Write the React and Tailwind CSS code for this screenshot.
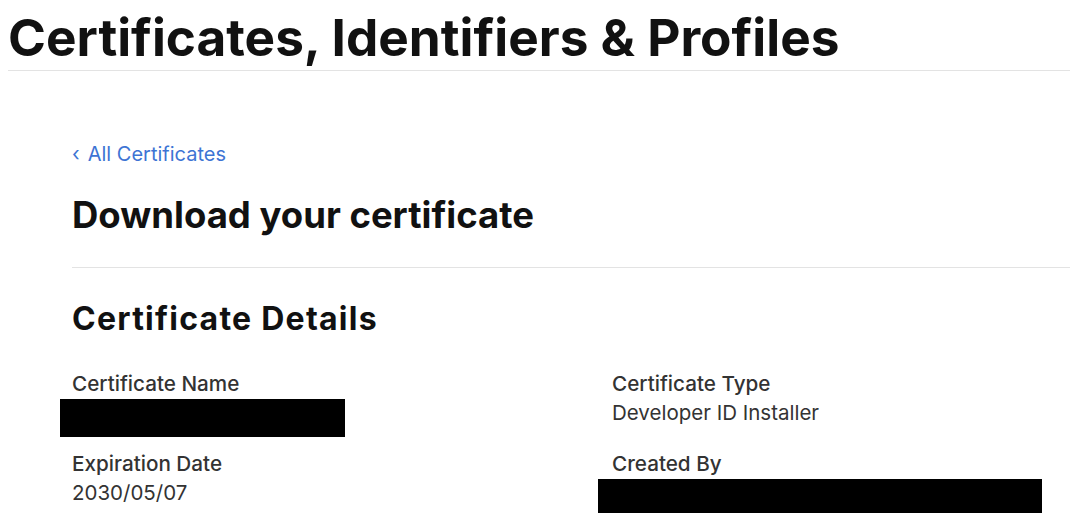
import React from 'react';

function Field({ label, children }) {
  return (
    <div className="flex flex-col">
      <div className="text-[20.7px] font-medium leading-[29px] text-[#333]">{label}</div>
      {children}
    </div>
  );
}

export default function App() {
  return (
    <div className="h-[530px] w-[1070px] overflow-hidden bg-white font-['Inter',sans-serif] text-[#111]">
      <header className="ml-2 border-b border-[#e3e3e3] pt-[9px] pb-[4px]">
        <h1 className="text-[51.3px] font-bold leading-[57px]">Certificates, Identifiers &amp; Profiles</h1>
      </header>

      <main className="pl-[72px] pt-[69px]">
        <a href="#" className="flex items-center gap-2 text-[20px] leading-[28px] text-[#3d74d4]">
          <span className="text-[20px]">‹</span>
          <span>All Certificates</span>
        </a>

        <div className="border-b border-[#e3e3e3] pt-[25px] pb-[30px]">
          <h2 className="text-[36.5px] font-bold leading-[44px]">Download your certificate</h2>
        </div>

        <h3 className="pt-[31px] text-[32px] font-bold leading-[40px] tracking-[1.25px]">Certificate Details</h3>

        <div className="grid grid-cols-[540px_1fr] gap-y-[12px] pt-[30px]">
          <Field label="Certificate Name">
            <div className="-ml-3 mt-[1px] h-[38px] w-[285px] bg-black" />
          </Field>
          <Field label="Certificate Type">
            <div className="text-[20.5px] leading-[29px] text-[#333]">Developer ID Installer</div>
          </Field>
          <Field label="Expiration Date">
            <div className="text-[20.5px] leading-[29px] text-[#333]">2030/05/07</div>
          </Field>
          <Field label="Created By">
            <div className="-ml-[14px] mt-[1px] h-[34px] w-[444px] bg-black" />
          </Field>
        </div>
      </main>
    </div>
  );
}
